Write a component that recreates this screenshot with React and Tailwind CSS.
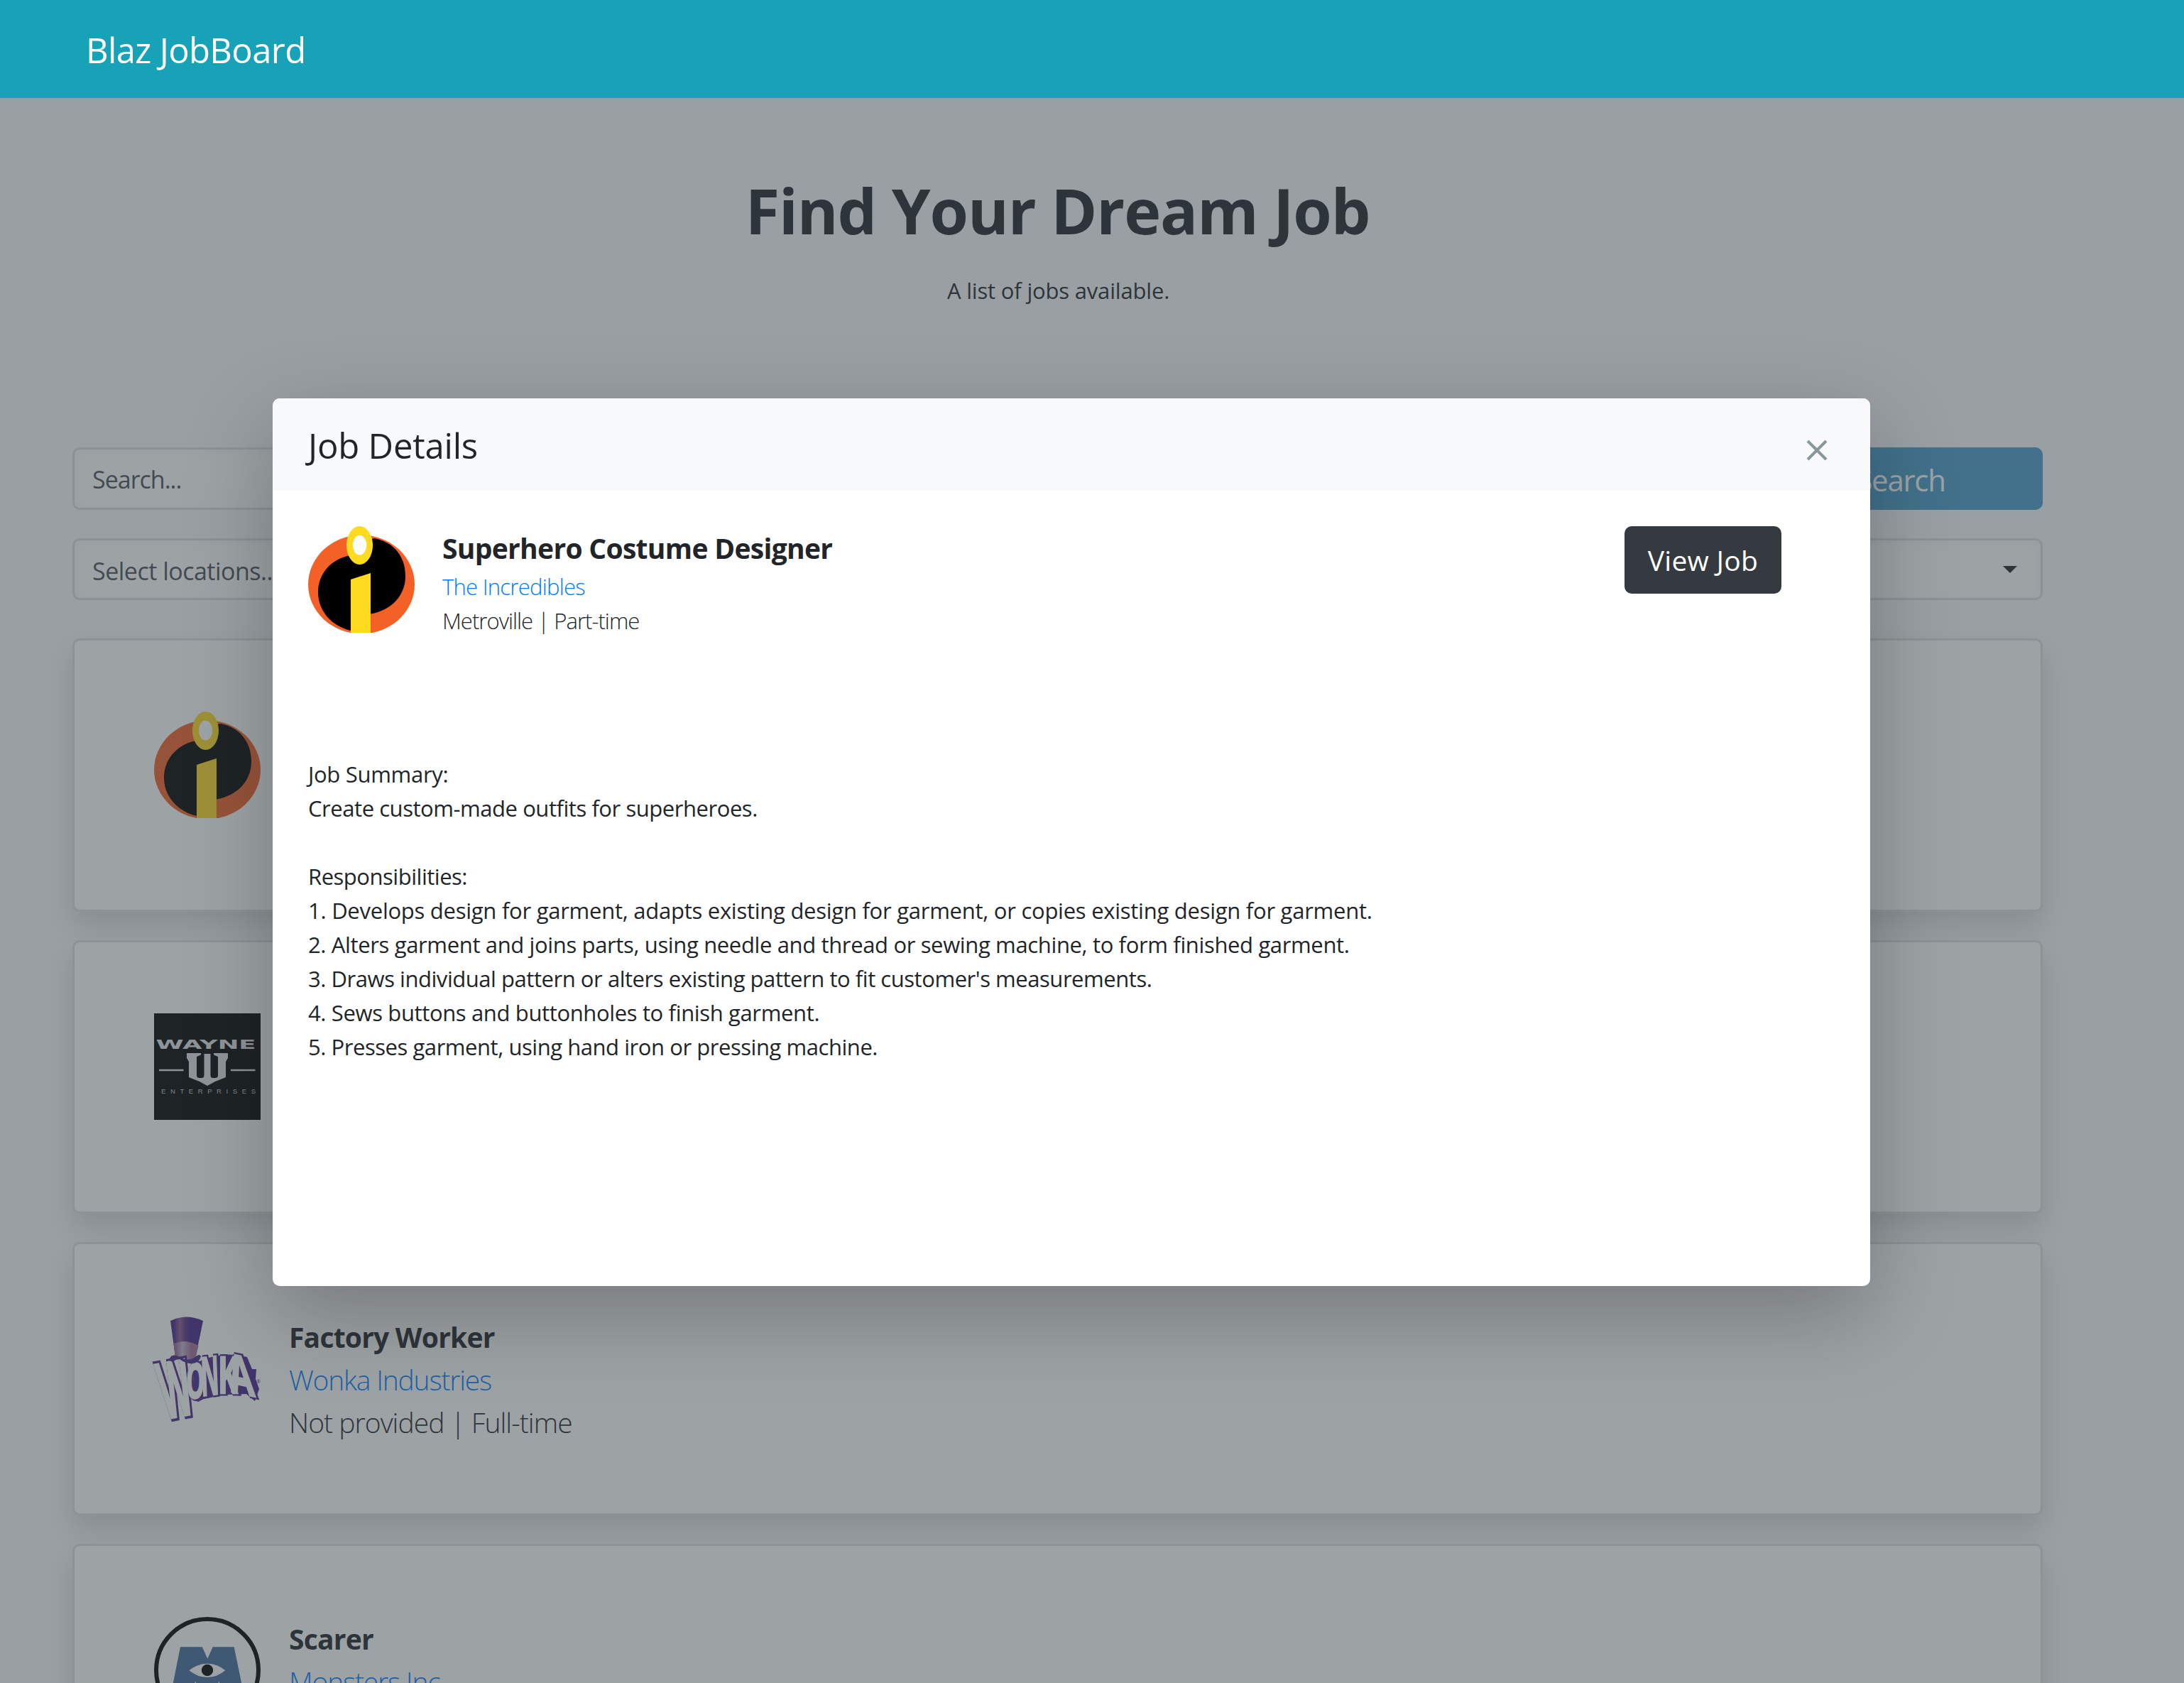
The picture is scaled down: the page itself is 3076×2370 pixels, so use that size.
import React from "react";

function IncrediblesLogo() {
  return (
    <svg viewBox="0 0 150 150" className="size-[150px] shrink-0">
      <ellipse cx="75" cy="82" rx="75" ry="69.5" fill="#f36127" />
      <path d="M75 22L93 17C120 22 137 42 137 70C137 98 117 118.500 88 123.500L60 147C34 141 14 120 14 93C14 67 32 47 57 41.500Z" fill="#000" />
      <ellipse cx="72.500" cy="27" rx="18.500" ry="27" fill="#fedb21" />
      <ellipse cx="72.500" cy="26.700" rx="9.700" ry="14" fill="#fff" />
      <path d="M60 75L88 66V150H60Z" fill="#fedb21" />
    </svg>
  );
}

function WayneLogo() {
  return (
    <svg viewBox="0 0 150 150" className="size-[150px] shrink-0">
      <rect width="150" height="150" fill="#000" />
      <g fill="#e1e2e2">
        <text x="2.500" y="50" textLength="141" lengthAdjust="spacingAndGlyphs" className="font-['DejaVu_Sans',sans-serif] text-[17px] font-bold">WAYNE</text>
        <path d="M46 56H66V58.500L60 61V87Q60 91 64 91H67Q70.500 91 70.500 87V57H79.500V87Q79.500 91 83 91H86Q90 91 90 87V61L84 58.500V56H104V63L101 68V90L86 96L75 102L64 96L49 90V68L46 63Z" />
        <path d="M7 78.800H41.500V81.300H7ZM108 78.800H142.500V81.300H108Z" />
      </g>
      <text x="10" y="113" fill="#c4c7c7" textLength="133" className="font-['Liberation_Sans',sans-serif] text-[9.500px]">ENTERPRISES</text>
    </svg>
  );
}

const wonkaLetters = [
  { ch: "W", m: "matrix(4.400 -0.820 2.240 10.600 16 146)" },
  { ch: "O", m: "matrix(3.300 -0.300 0 6.800 45 118)" },
  { ch: "N", m: "matrix(3.100 -0.400 0.280 7.500 67 114)" },
  { ch: "K", m: "matrix(4.200 0 0 7.200 90 110)" },
  { ch: "A", m: "matrix(4.900 1 1.100 7.600 109 108)" },
];

function WonkaLogo() {
  return (
    <svg viewBox="0 0 150 150" className="size-[150px] shrink-0 overflow-visible">
      <defs>
        <linearGradient id="hat" x1="0" x2="1">
          <stop offset="0.100" stopColor="#482486" />
          <stop offset="0.300" stopColor="#8c5a92" />
          <stop offset="0.450" stopColor="#5d3488" />
          <stop offset="0.600" stopColor="#482486" />
        </linearGradient>
        <linearGradient id="band" x1="0" x2="1">
          <stop offset="0.100" stopColor="#9a6898" />
          <stop offset="0.350" stopColor="#c4b2cc" />
          <stop offset="0.700" stopColor="#a06c98" />
        </linearGradient>
      </defs>
      <path d="M23 8Q45 -3 69 8L58 61Q44 66 30 59Z" fill="url(#hat)" />
      <path d="M27.500 40Q44 33 62.500 43L58 62Q44 66 30 59Z" fill="url(#band)" />
      <path d="M66 64Q98 50 131 59L138 76L144 76L143 90L148 104L142 121L130 111L100 112L70 118L62 122L54 118L56 72Z" fill="#482486" />
      <g className="font-['Open_Sans',sans-serif] text-[10px] font-bold" fill="#482486" stroke="#482486" strokeWidth="1">
        {wonkaLetters.map(({ ch, m }) => (
          <g key={ch} transform="translate(1.500 0)">
            <text transform={m}>{ch}</text>
          </g>
        ))}
      </g>
      <g className="font-['Open_Sans',sans-serif] text-[10px] font-bold" fill="#fff" stroke="#fff" strokeWidth="0.350">
        {wonkaLetters.map(({ ch, m }) => (
          <text key={ch} transform={m}>{ch}</text>
        ))}
      </g>
      <path d="M22 61Q25 54 34 58Q48 67 59 58Q64 54 66 58Q64 66 55 68Q45 69 36 62Q31 62 27 65Q21 66 22 61Z" fill="#482486" />
      <text x="144" y="96" fill="#482486" className="font-['Open_Sans',sans-serif] text-[7px]">®</text>
    </svg>
  );
}

function MonstersLogo() {
  return (
    <svg viewBox="0 0 150 150" className="size-[150px] shrink-0">
      <circle cx="75" cy="75" r="72" fill="none" stroke="#000" strokeWidth="6" />
      <path d="M37 42.300H67.700L75.300 58.700L82.700 42.300H112.700L127 112H100L91.300 90.300L84 112H66L58.300 90.300L50 112H23Z" fill="#426c9c" />
      <path d="M49.300 75.300Q61 65.700 75 65.700Q89 65.700 100.300 75.300Q89 85 75 85Q61 85 49.300 75.300Z" fill="#fff" />
      <circle cx="75" cy="75" r="8.200" fill="#000" />
    </svg>
  );
}

const featured = {
  title: "Superhero Costume Designer",
  company: "The Incredibles",
  meta: "Metroville | Part-time",
};

const jobs = [
  { id: "incredibles", Logo: IncrediblesLogo },
  { id: "wayne", Logo: WayneLogo },
  { id: "wonka", title: "Factory Worker", company: "Wonka Industries", meta: "Not provided | Full-time", Logo: WonkaLogo },
  { id: "monsters", title: "Scarer", company: "Monsters Inc.", Logo: MonstersLogo },
];

function JobCard({ job }) {
  const { Logo, title, company, meta } = job;
  return (
    <article className="flex h-[385px] shrink-0 items-start gap-10 rounded-[10px] border-[3px] border-[#dfdfdf] bg-white pt-[100px] pl-28 shadow-[0_20px_40px_rgba(0,0,0,0.15)]">
      <Logo />
      {title && (
        <div className="pt-px text-[39px] leading-[60px] whitespace-nowrap">
          <h2 className="font-bold tracking-[-0.780px]">{title}</h2>
          <p className="font-light tracking-[-1.200px] text-[#007bff]">{company}</p>
          {meta && <p className="font-light tracking-[-0.970px]">{meta}</p>}
        </div>
      )}
    </article>
  );
}

const description = [
  { text: "Job Summary:", cls: "tracking-[-0.300px]" },
  { text: "Create custom-made outfits for superheroes.", cls: "tracking-[-0.450px]" },
  { text: "\u00a0", cls: "" },
  { text: "Responsibilities:", cls: "tracking-[-0.480px]" },
  { text: "1. Develops design for garment, adapts existing design for garment, or copies existing design for garment.", cls: "tracking-[-0.260px]" },
  { text: "2. Alters garment and joins parts, using needle and thread or sewing machine, to form finished garment.", cls: "tracking-[-0.360px]" },
  { text: "3. Draws individual pattern or alters existing pattern to fit customer's measurements.", cls: "tracking-[-0.455px]" },
  { text: "4. Sews buttons and buttonholes to finish garment.", cls: "tracking-[-0.360px]" },
  { text: "5. Presses garment, using hand iron or pressing machine.", cls: "tracking-[-0.450px]" },
];

function JobDialog() {
  return (
    <section className="absolute top-[561px] left-[384px] flex h-[1250px] w-[2250px] flex-col rounded-[10px] bg-white shadow-[0_40px_120px_rgba(0,0,0,0.25)]">
      <header className="flex h-[130px] shrink-0 items-center justify-between rounded-t-[10px] bg-[#f8f9fb] pr-[59px] pl-[50px]">
        <h2 className="pt-0.5 text-[49px] leading-[60px] tracking-[-0.200px]">Job Details</h2>
        <svg viewBox="0 0 32 32" className="mt-[15px] size-8 text-[#87979a]">
          <path d="M3 3L29 29M29 3L3 29" fill="none" stroke="currentColor" strokeWidth="4" />
        </svg>
      </header>
      <div className="flex grow flex-col px-[50px] pt-[50px]">
        <div className="flex items-start">
          <IncrediblesLogo />
          <div className="grow pt-px pl-[39px] whitespace-nowrap">
            <h3 className="text-[39px] leading-[60px] font-bold tracking-[-0.690px]">{featured.title}</h3>
            <p className="text-[31px] leading-[48px] font-light tracking-[-0.730px] text-[#007bff]">{featured.company}</p>
            <p className="text-[31px] leading-[48px] font-light tracking-[-0.950px]">{featured.meta}</p>
          </div>
          <button className="mr-[75px] h-[95px] w-[221px] rounded-[10px] bg-[#343a40] pt-0.5 text-[39px] tracking-[0.300px] text-white">View Job</button>
        </div>
        <div className="mt-[168px] text-[31px] leading-[48px] whitespace-nowrap">
          {description.map(({ text, cls }, i) => (
            <p key={i} className={cls}>{text}</p>
          ))}
        </div>
      </div>
    </section>
  );
}

export default function App() {
  return (
    <div className="relative flex h-[2370px] w-[3076px] flex-col overflow-hidden bg-[#f8f9fa] font-['Open_Sans','Noto_Sans',sans-serif] text-[#212529]">
      <header className="flex h-[138px] shrink-0 items-center bg-[#17a2b8] pt-1 pl-[121px] text-[49px] tracking-[-0.650px] text-white">Blaz JobBoard</header>
      <main className="ml-[102px] flex w-[2775px] shrink-0 flex-col">
        <div className="flex h-[492px] shrink-0 flex-col items-center pt-[103px]">
          <h1 className="text-[88px] leading-[110px] font-bold tracking-[-1.100px]">Find Your Dream Job</h1>
          <p className="mt-[34px] pl-0.5 text-[31px] leading-[48px] tracking-[-0.180px]">A list of jobs available.</p>
        </div>
        <div className="flex h-[88px] gap-[50px] text-[#495057]">
          <div className="flex grow items-center rounded-[10px] border-[3px] border-[#dadfe1] bg-white pt-0.5 pl-[25px] text-[34px] tracking-[-1px] shadow-[inset_0_3px_16px_rgba(0,0,0,0.050)]">Search...</div>
          <button className="w-[400px] rounded-[10px] bg-[#469cca] pt-0.5 text-[42px] tracking-[-1.300px] text-white">Search</button>
        </div>
        <div className="mt-10 flex h-[87px] items-center justify-between rounded-[10px] border-[3px] border-[#dadfe1] bg-white pr-[33px] pl-[25px] text-[34px] tracking-[-0.500px] text-[#495057] shadow-[inset_0_3px_16px_rgba(0,0,0,0.050)]">
          <span className="pt-1.5">Select locations...</span>
          <svg viewBox="0 0 20 10" className="h-2.5 w-5">
            <path d="M0 0H20L10 10Z" fill="#212529" />
          </svg>
        </div>
        <div className="mt-[54px] flex flex-col gap-10">
          {jobs.map((job) => (
            <JobCard key={job.id} job={job} />
          ))}
        </div>
      </main>
      <div className="absolute inset-x-0 top-[138px] bottom-0 bg-[rgba(60,70,76,0.500)]" />
      <JobDialog />
    </div>
  );
}
